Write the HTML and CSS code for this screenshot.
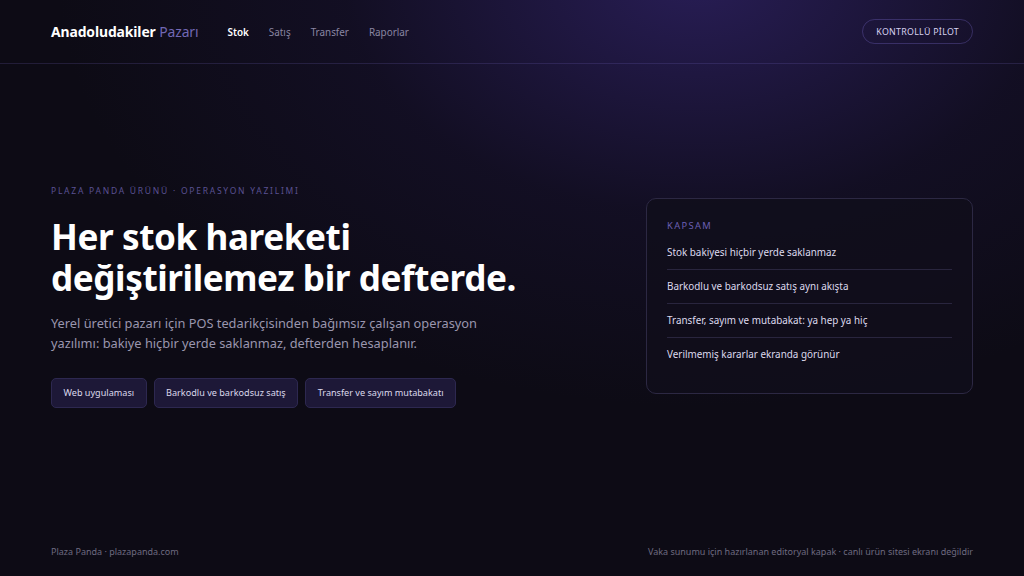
FILE: index.html
```html
<!DOCTYPE html>
<html lang="tr">
<head>
<meta charset="utf-8">
<title>Anadoludakiler Pazarı</title>
<link rel="stylesheet" href="styles.css">
</head>
<body>
<div class="page">
  <header class="topbar">
    <div class="brand-nav">
      <div class="brand">Anadoludakiler <span class="brand-sub">Pazarı</span></div>
      <nav class="nav">
        <a class="nav-link active">Stok</a>
        <a class="nav-link">Satış</a>
        <a class="nav-link">Transfer</a>
        <a class="nav-link">Raporlar</a>
      </nav>
    </div>
    <div class="pill">KONTROLLÜ PİLOT</div>
  </header>

  <main class="hero">
    <section class="hero-text">
      <div class="eyebrow">PLAZA PANDA ÜRÜNÜ · OPERASYON YAZILIMI</div>
      <h1 class="title">Her stok hareketi<br>değiştirilemez bir defterde.</h1>
      <p class="lead">Yerel üretici pazarı için POS tedarikçisinden bağımsız çalışan operasyon yazılımı: bakiye hiçbir yerde saklanmaz, defterden hesaplanır.</p>
      <div class="chips">
        <span class="chip">Web uygulaması</span>
        <span class="chip">Barkodlu ve barkodsuz satış</span>
        <span class="chip">Transfer ve sayım mutabakatı</span>
      </div>
    </section>
    <aside class="card">
      <div class="card-label">KAPSAM</div>
      <ul class="card-list">
        <li>Stok bakiyesi hiçbir yerde saklanmaz</li>
        <li>Barkodlu ve barkodsuz satış aynı akışta</li>
        <li>Transfer, sayım ve mutabakat: ya hep ya hiç</li>
        <li>Verilmemiş kararlar ekranda görünür</li>
      </ul>
    </aside>
  </main>

  <footer class="footer">
    <span>Plaza Panda · plazapanda.com</span>
    <span>Vaka sunumu için hazırlanan editoryal kapak · canlı ürün sitesi ekranı değildir</span>
  </footer>
</div>
</body>
</html>
```

FILE: styles.css
```css
* { box-sizing: border-box; }
html, body { margin: 0; padding: 0; }
body {
  font-family: "Noto Sans", "Open Sans", sans-serif;
  color: #fff;
  background-color: #0d0b15;
  background-image:
    radial-gradient(ellipse 640px 430px at 68% -4%, rgba(62, 44, 138, 0.55), rgba(40, 28, 90, 0.2) 55%, rgba(13, 11, 21, 0) 100%);
  width: 1024px;
  height: 576px;
  overflow: hidden;
}
.page {
  height: 576px;
  display: flex;
  flex-direction: column;
}
.topbar {
  height: 64px;
  flex: none;
  display: flex;
  align-items: center;
  justify-content: space-between;
  padding: 0 51px;
  border-bottom: 1px solid rgba(120, 104, 200, 0.2);
}
.brand-nav { display: flex; align-items: center; gap: 29px; }
.brand { font-size: 13.9px; font-weight: 700; letter-spacing: -0.1px; color: #fff; }
.brand-sub { font-weight: 400; color: #7268b4; }
.nav { display: flex; gap: 20px; }
.nav-link { font-size: 9.9px; color: #8a86a2; }
.nav-link.active { color: #fff; font-weight: 600; }
.pill {
  height: 25px;
  padding: 0 13px;
  display: flex;
  align-items: center;
  border: 1px solid rgba(130, 112, 220, 0.3);
  border-radius: 13px;
  font-size: 8.8px;
  letter-spacing: 0.3px;
  color: #d8d2f0;
}
.hero {
  flex: 1;
  display: flex;
  align-items: center;
  justify-content: space-between;
  padding: 2px 51px 0;
}
.hero-text { width: 520px; }
.eyebrow {
  font-size: 8.5px;
  letter-spacing: 1.75px;
  color: #5a5192;
  margin-bottom: 20px;
}
.title {
  margin: 0 0 15px;
  font-size: 35.1px;
  line-height: 41px;
  font-weight: 700;
  letter-spacing: -0.4px;
  color: #fff;
}
.lead {
  margin: 0 0 25px;
  font-size: 12.8px;
  line-height: 20px;
  color: #9a96ae;
  width: 440px;
}
.chips { display: flex; gap: 7px; }
.chip {
  height: 30px;
  display: flex;
  align-items: center;
  padding: 0 11.5px;
  font-size: 9.1px;
  color: #dcd8ec;
  background: #1d1837;
  border: 1px solid #2d2850;
  border-radius: 5px;
}
.card {
  width: 327px;
  padding: 21px 20px 22px;
  background: rgba(16, 14, 27, 0.85);
  border: 1px solid #2c2843;
  border-radius: 10px;
}
.card-label {
  font-size: 9.3px;
  line-height: 12px;
  letter-spacing: 1.4px;
  color: #6a5fb2;
  margin-bottom: 4px;
}
.card-list { list-style: none; margin: 0; padding: 0; }
.card-list li {
  font-size: 9.9px;
  line-height: 13px;
  color: #dedaee;
  padding: 10px 0;
  border-bottom: 1px solid #29253e;
}
.card-list li:last-child { border-bottom: none; }
.footer {
  flex: none;
  height: 50px;
  display: flex;
  align-items: center;
  justify-content: space-between;
  padding: 0 51px;
  font-size: 9px;
  color: #6e6a80;
}
```
